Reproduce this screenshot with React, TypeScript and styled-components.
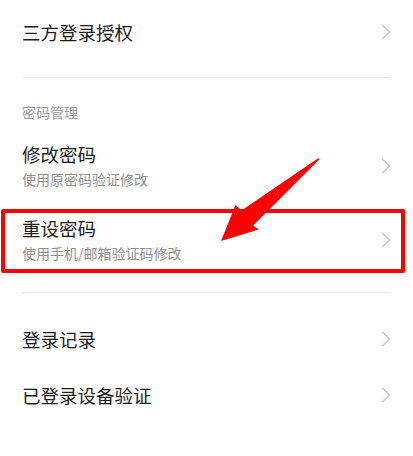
import styled, { createGlobalStyle } from "styled-components";

const GlobalStyle = createGlobalStyle`
  html, body {
    margin: 0;
    padding: 0;
    background: #ffffff;
  }
  body {
    font-family: "Noto Sans CJK SC", "Noto Sans", sans-serif;
    -webkit-font-smoothing: antialiased;
  }
`;

function Chevron() {
  return (
    <ChevronIcon width="10" height="16" viewBox="0 0 10 16">
      <path d="M1.2 1 L8.6 8 L1.2 15" fill="none" stroke="#c6c6c6" strokeWidth="1.4" />
    </ChevronIcon>
  );
}

export default function App() {
  return (
    <Page>
      <GlobalStyle />

      <TopRow>
        <Title>三方登录授权</Title>
        <Chevron />
      </TopRow>
      <Divider $top={11} />

      <SectionHeader>密码管理</SectionHeader>

      <TwoLineRow>
        <TextBlock>
          <Title>修改密码</Title>
          <Subtitle>使用原密码验证修改</Subtitle>
        </TextBlock>
        <Chevron />
      </TwoLineRow>

      <Highlighted>
        <TwoLineRow>
          <TextBlock>
            <Title>重设密码</Title>
            <Subtitle>使用手机/邮箱验证码修改</Subtitle>
          </TextBlock>
          <Chevron />
        </TwoLineRow>
        <RedFrame />
      </Highlighted>

      <Divider $top={14} />

      <Spacer />
      <Row>
        <Title>登录记录</Title>
        <Chevron />
      </Row>
      <Row>
        <Title>已登录设备验证</Title>
        <Chevron />
      </Row>

      <ArrowOverlay width="413" height="456" viewBox="0 0 413 456">
        <polygon
          points="318.5,158 241.5,210.5 235.5,205 221,241 258.5,229.5 253,225.5 319.2,159.6"
          fill="#ff0000"
        />
      </ArrowOverlay>
    </Page>
  );
}

const Page = styled.div`
  position: relative;
  width: 413px;
  height: 456px;
  background: #ffffff;
  overflow: hidden;
`;

const Row = styled.div`
  display: flex;
  align-items: center;
  justify-content: space-between;
  height: 56px;
  padding: 0 22px 2px 22px;
  box-sizing: border-box;
`;

const TopRow = styled(Row)`
  height: 66px;
`;

const TwoLineRow = styled(Row)`
  height: 74px;
`;

const TextBlock = styled.div`
  display: flex;
  flex-direction: column;
  gap: 4px;
`;

const Title = styled.div`
  font-size: 18.5px;
  line-height: 22px;
  color: #1c1c1c;
`;

const Subtitle = styled.div`
  font-size: 14px;
  line-height: 20px;
  color: #8f8f8f;
`;

const SectionHeader = styled.div`
  padding: 24px 22px 8px;
  font-size: 14px;
  line-height: 20px;
  color: #9a9a9a;
`;

const Divider = styled.div<{ $top: number }>`
  height: 1px;
  margin: ${(p) => p.$top}px 22px 0;
  background: #e8e8e8;
`;

const Spacer = styled.div`
  height: 19px;
`;

const ChevronIcon = styled.svg`
  flex-shrink: 0;
`;

const Highlighted = styled.div`
  position: relative;
`;

const RedFrame = styled.div`
  position: absolute;
  top: 5px;
  bottom: 5px;
  left: 1px;
  right: 8px;
  border: 4px solid #ff0000;
  border-radius: 2px;
  pointer-events: none;
`;

const ArrowOverlay = styled.svg`
  position: absolute;
  top: 0;
  left: 0;
  pointer-events: none;
`;
